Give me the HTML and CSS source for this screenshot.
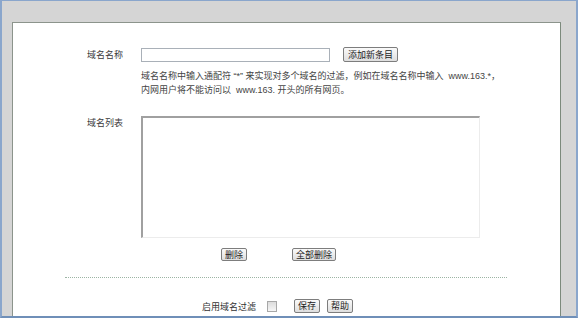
FILE: index.html
```html
<!DOCTYPE html>
<html lang="zh-CN">
<head>
    <meta charset="UTF-8">
    <title>域名过滤</title>
    <link rel="stylesheet" href="styles.css">
</head>
<body>
    <div class="frame">
        <div class="panel">
            <div class="row first">
                <span class="label">域名名称</span>
                <input type="text" class="name-input">
                <button class="btn add">添加新条目</button>
            </div>
            <div class="hint">
                <p>域名名称中输入通配符 “*” 来实现对多个域名的过滤，例如在域名名称中输入 &nbsp;www.163.*，</p>
                <p>内网用户将不能访问以 &nbsp;www.163. 开头的所有网页。</p>
            </div>
            <div class="row list-row">
                <span class="label">域名列表</span>
                <textarea class="list"></textarea>
            </div>
            <div class="list-buttons">
                <button class="btn">删除</button>
                <button class="btn">全部删除</button>
            </div>
            <div class="divider"></div>
            <div class="footer">
                <span class="footer-label">启用域名过滤</span>
                <input type="checkbox" class="check">
                <button class="btn save">保存</button>
                <button class="btn">帮助</button>
            </div>
        </div>
    </div>
</body>
</html>
```

FILE: styles.css
```css
html, body {
    margin: 0;
    height: 100%;
}
body {
    font-family: 'Liberation Sans', 'Noto Sans CJK SC', sans-serif;
    color: #333;
    font-size: 9px;
}
.frame {
    box-sizing: border-box;
    height: 318px;
    background: #d5d5d5;
    border-left: 2px solid #8aa6cc;
    border-top: 1px solid #8aa6cc;
    border-right: 2px solid #8aa6cc;
    border-bottom: 2px solid #6f8fb8;
    padding: 21px 15px 0 10px;
}
.panel {
    box-sizing: border-box;
    height: 100%;
    background: #fff;
    border-left: 1px solid #8c948c;
    border-top: 1px solid #8c948c;
    border-right: 1px solid #7c8a7c;
    padding-top: 24px;
    padding-left: 74px;
}
.row {
    display: flex;
    align-items: center;
}
.label {
    width: 54px;
    flex: none;
    font-size: 9px;
    color: #3a3a3a;
}
.name-input {
    box-sizing: border-box;
    width: 189px;
    height: 14px;
    margin: 0;
    border: 1px solid #a9b0b8;
    padding: 0;
}
.btn {
    box-sizing: border-box;
    font-family: 'Liberation Sans', 'Noto Sans CJK SC', sans-serif;
    font-size: 9px;
    color: #222;
    height: 14px;
    line-height: 12px;
    padding: 0 3px;
    margin: 0;
    border: 1px solid #7d7d7d;
    border-radius: 2px;
    background: linear-gradient(#fafafa, #dedede);
}
.add {
    margin-left: 13px;
    width: 55px;
    height: 15px;
}
.hint {
    margin: 7px 0 0 54px;
    color: #444;
    font-size: 9px;
    line-height: 14px;
    white-space: nowrap;
}
.hint p {
    margin: 0;
}
.list-row {
    align-items: flex-start;
    margin-top: 19px;
}
.list {
    box-sizing: border-box;
    width: 339px;
    height: 122px;
    margin: 0;
    resize: none;
    border: 1px solid #ececec;
    border-top: 2px solid #a0a0a0;
    border-left: 2px solid #a0a0a0;
}
.list-buttons {
    display: flex;
    gap: 45px;
    margin: 10px 0 0 134px;
}
.list-buttons .btn {
    height: 13px;
}
.divider {
    margin: 16px 0 0 -22px;
    width: 442px;
    border-top: 1px dotted #9cb4a4;
}
.footer {
    display: flex;
    align-items: center;
    margin: 21px 0 0 115px;
}
.footer-label {
    font-size: 9px;
}
.check {
    appearance: none;
    box-sizing: border-box;
    width: 10px;
    height: 11px;
    margin: 0 17px 0 11px;
    border: 1px solid #a8a8a8;
    background: linear-gradient(#dcdcdc, #f6f6f6);
}
.save {
    margin-right: 7px;
}
```
